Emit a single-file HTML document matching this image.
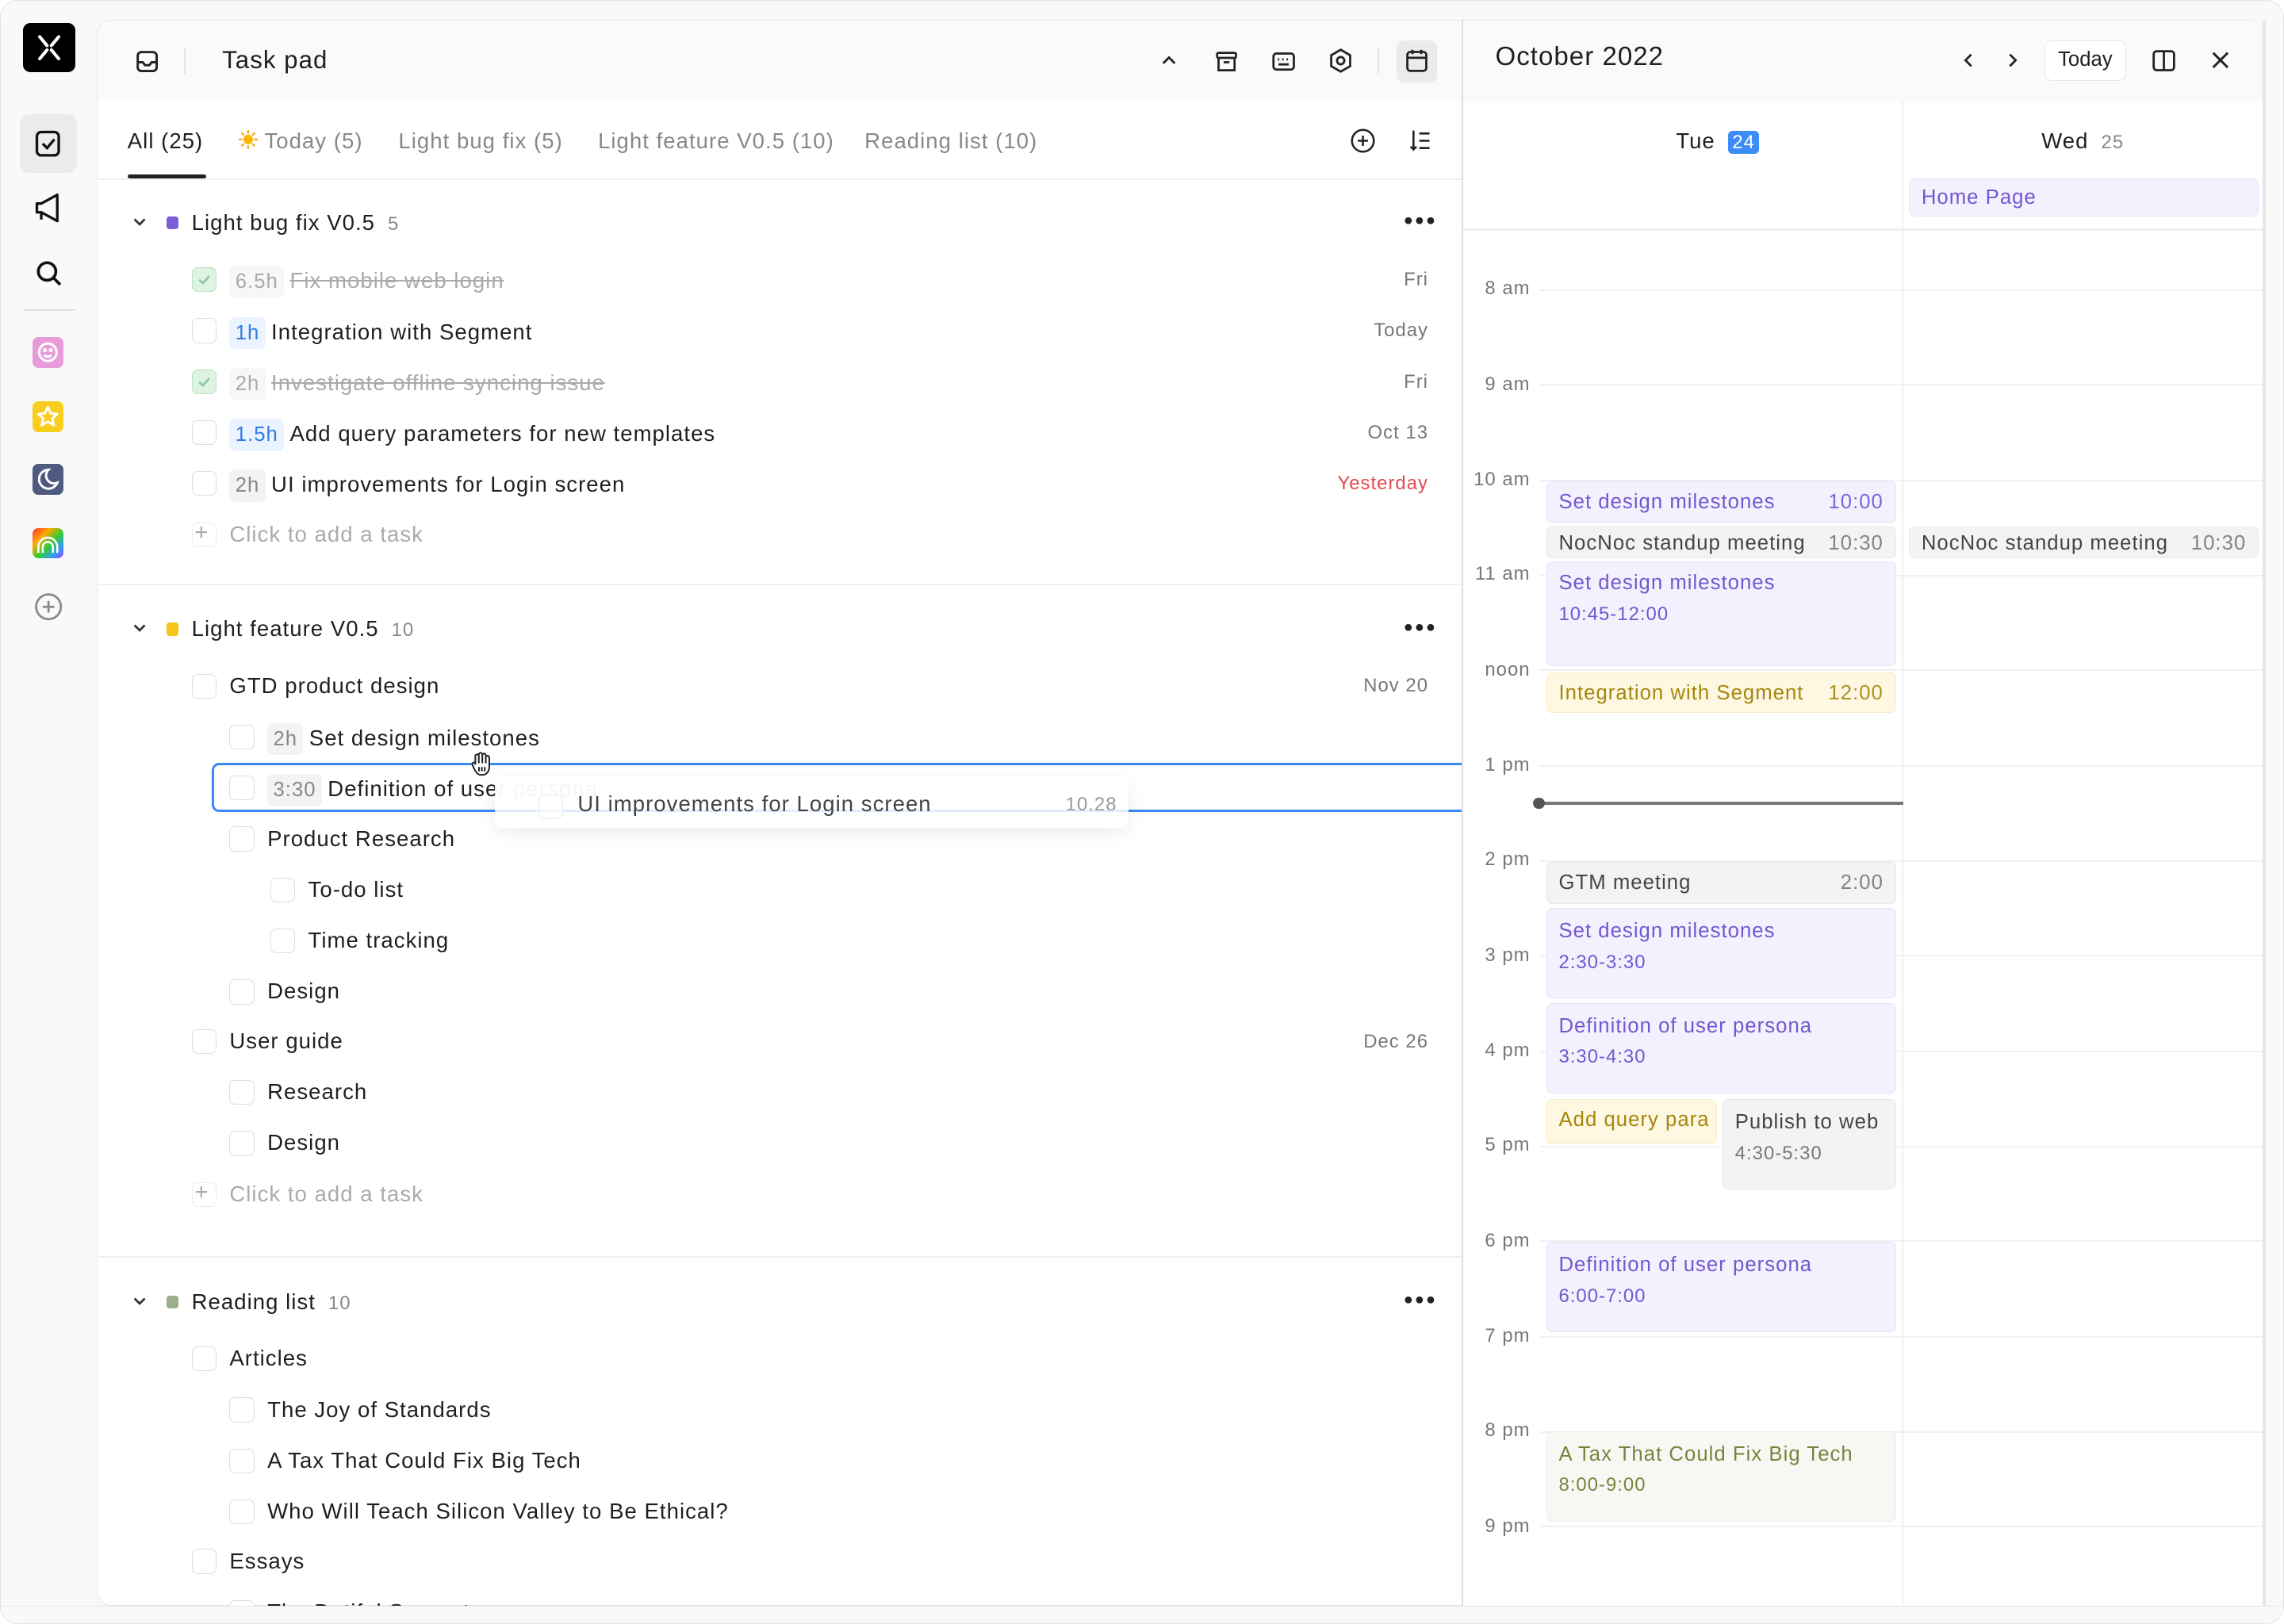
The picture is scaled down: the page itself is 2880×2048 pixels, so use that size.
<!DOCTYPE html>
<html><head><meta charset="utf-8"><style>
*{box-sizing:border-box;margin:0;padding:0}
html,body{width:2880px;height:2048px;overflow:hidden;background:#fff}
#r{zoom:1.83674;width:1568px;height:1115px;position:relative;font-family:"Liberation Sans",Arial,sans-serif;color:#1f1f1f;background:#f9f9f9;border:1px solid #e3e3e3;border-radius:12px;overflow:hidden;letter-spacing:0.035em}
.a{position:absolute}
.main{left:66px;top:13px;width:1489px;height:1089px;background:#fff;border:1px solid #e6e6e6;border-radius:10px;overflow:hidden}
.t{position:absolute;font-size:15px;white-space:nowrap;line-height:18px}
.cb{position:absolute;width:17px;height:17px;border:1px solid #ddd;border-radius:4px;background:#fff}
.cb.d{background:#dff3e3;border-color:#b9e2c2}
.tag{display:inline-block;padding:0 4px;border-radius:4px;background:#f3f3f3;color:#888;font-size:14px;line-height:22px;margin-right:4px}
.tag.b{background:#eaf3ff;color:#2f7de1}
.date{position:absolute;right:0;font-size:13px;color:#777;text-align:right;width:100px}
.ev{position:absolute;border-radius:4px;font-size:14px;padding:5px 8px;line-height:18px;white-space:nowrap;overflow:hidden}
.p{background:#f3f1fd;border:1px solid #e6e2f8;color:#7257cf}
.g{background:#f3f3f3;border:1px solid #e8e8e8;color:#444}
.y{background:#fef8e3;border:1px solid #f8edc0;color:#a5860c}
.o{background:#f7f8f3;border:1px solid #ecede6;color:#77843f}
.ev .tm{position:absolute;right:8px;top:5px;opacity:.9}
.hl{position:absolute;left:1057px;width:498px;height:1px;background:#f0f0f0}
.hr{position:absolute;width:40px;text-align:right;left:1010px;font-size:13px;color:#777}
.dots{position:absolute;font-size:11px;letter-spacing:1px;color:#222}
svg{position:absolute}
</style></head><body><div id="r">
<!-- sidebar -->
<div class="a" style="left:15px;top:15px;width:36px;height:34px;background:#000;border-radius:5px"></div>
<svg style="left:15px;top:15px" width="36" height="34" viewBox="0 0 36 34"><path d="M11.5 9.5l5 6M24.5 9.5l-5 6M11.5 24.5l5-6M24.5 24.5l-5-6" stroke="#fff" stroke-width="2.2" stroke-linecap="round"/></svg>
<div class="a" style="left:13px;top:78px;width:39px;height:40px;background:#ebebeb;border-radius:6px"></div>
<svg style="left:22px;top:87px" width="22" height="22" viewBox="0 0 22 22" fill="none" stroke="#111" stroke-width="1.8"><rect x="3" y="3" width="15" height="16" rx="3"/><path d="M7 11l3 3 5-6"/></svg>
<svg style="left:22px;top:131px" width="22" height="22" viewBox="0 0 22 22" fill="none" stroke="#111" stroke-width="1.8" stroke-linejoin="round"><path d="M3 8h3l11-6v18L6 14H3z M6 14v5"/></svg>
<svg style="left:22px;top:176px" width="22" height="22" viewBox="0 0 22 22" fill="none" stroke="#111" stroke-width="2"><circle cx="10" cy="10" r="6"/><path d="M14.5 14.5L19 19"/></svg>
<div class="a" style="left:15px;top:212px;width:36px;height:1px;background:#e3e3e3"></div>
<div class="a" style="left:22px;top:231px;width:21px;height:21px;background:#e89bd9;border-radius:4px"></div>
<svg style="left:22px;top:231px" width="21" height="21" viewBox="0 0 21 21" fill="none" stroke="#fff" stroke-width="1.6"><circle cx="10.5" cy="10.5" r="6"/><path d="M8 12.5q2.5 2 5 0"/><circle cx="8.5" cy="9" r=".6" fill="#fff"/><circle cx="12.5" cy="9" r=".6" fill="#fff"/></svg>
<div class="a" style="left:22px;top:275px;width:21px;height:21px;background:#f8cd1d;border-radius:4px"></div>
<svg style="left:22px;top:275px" width="21" height="21" viewBox="0 0 21 21" fill="none" stroke="#fff" stroke-width="1.6" stroke-linejoin="round"><path d="M10.5 4l2 4.3 4.5.5-3.4 3 1 4.6-4.1-2.4-4.1 2.4 1-4.6-3.4-3 4.5-.5z"/></svg>
<div class="a" style="left:22px;top:318px;width:21px;height:21px;background:#4e5a7e;border-radius:4px"></div>
<svg style="left:22px;top:318px" width="21" height="21" viewBox="0 0 21 21" fill="none" stroke="#fff" stroke-width="1.6"><path d="M11 4a6.5 6.5 0 1 0 6 9A5.5 5.5 0 0 1 11 4z"/></svg>
<div class="a" style="left:22px;top:362px;width:21px;height:21px;border-radius:4px;background:linear-gradient(135deg,#f33 0%,#fa0 30%,#3c3 55%,#39f 80%,#a3f 100%)"></div>
<svg style="left:22px;top:362px" width="21" height="21" viewBox="0 0 21 21" fill="none" stroke="#fff" stroke-width="1.4"><path d="M4 17v-4a6.5 6.5 0 0 1 13 0v4M7 17v-4a3.5 3.5 0 0 1 7 0v4"/></svg>
<svg style="left:22px;top:405px" width="22" height="22" viewBox="0 0 22 22" fill="none" stroke="#888" stroke-width="1.5"><circle cx="11" cy="11" r="8.5"/><path d="M11 7v8M7 11h8"/></svg>

<div class="a main">
 <div class="a" style="left:0;top:0;width:1489px;height:55px;background:#fafafa"></div>
</div>
<!-- header -->
<svg style="left:92px;top:33px" width="17" height="17" viewBox="0 0 17 17" fill="none" stroke="#222" stroke-width="1.6"><rect x="2" y="2" width="13" height="13" rx="2.5"/><path d="M2 9h3.5l1.5 2h3l1.5-2H15"/></svg>
<div class="a" style="left:126px;top:32px;width:1px;height:18px;background:#e3e3e3"></div>
<div class="t" style="left:152px;top:31px;font-size:17px;line-height:20px">Task pad</div>
<svg style="left:796px;top:36px" width="12" height="10" viewBox="0 0 12 10" fill="none" stroke="#222" stroke-width="1.5"><path d="M2 7l4-4 4 4"/></svg>
<svg style="left:833px;top:33px" width="17" height="17" viewBox="0 0 17 17" fill="none" stroke="#222" stroke-width="1.5"><rect x="2" y="2.5" width="13" height="3.5" rx="1"/><path d="M3 6v8.5h11V6M6.5 9h4"/></svg>
<svg style="left:872px;top:33px" width="17" height="17" viewBox="0 0 17 17" fill="none" stroke="#222" stroke-width="1.5"><rect x="1.5" y="3" width="14" height="11" rx="2"/><path d="M4.5 7h1M7.5 7h1M10.5 7h1M5 10.5h7" /></svg>
<svg style="left:911px;top:32px" width="18" height="18" viewBox="0 0 18 18" fill="none" stroke="#222" stroke-width="1.5"><path d="M9 1.5l6.5 3.75v7.5L9 16.5 2.5 12.75v-7.5z"/><circle cx="9" cy="9" r="2.5"/></svg>
<div class="a" style="left:945px;top:32px;width:1px;height:18px;background:#e3e3e3"></div>
<div class="a" style="left:958px;top:27px;width:28px;height:29px;background:#ebebeb;border-radius:5px"></div>
<svg style="left:963px;top:32px" width="18" height="18" viewBox="0 0 18 18" fill="none" stroke="#222" stroke-width="1.5"><rect x="2.5" y="3" width="13" height="13" rx="2"/><path d="M2.5 7h13M6 1.5v3M12 1.5v3"/></svg>
<div class="t" style="left:1026px;top:29px;font-size:18px;line-height:20px">October 2022</div>
<svg style="left:1345px;top:35px" width="12" height="12" viewBox="0 0 12 12" fill="none" stroke="#222" stroke-width="1.5"><path d="M8 2L4 6l4 4"/></svg>
<svg style="left:1375px;top:35px" width="12" height="12" viewBox="0 0 12 12" fill="none" stroke="#222" stroke-width="1.5"><path d="M4 2l4 4-4 4"/></svg>
<div class="a" style="left:1403px;top:27px;width:56px;height:28px;background:#fff;border:1px solid #e6e6e6;border-radius:5px;font-size:14px;text-align:center;line-height:26px;letter-spacing:0">Today</div>
<svg style="left:1476px;top:32px" width="18" height="18" viewBox="0 0 18 18" fill="none" stroke="#222" stroke-width="1.5"><rect x="2" y="2.5" width="14" height="13" rx="2"/><path d="M9 2.5v13"/></svg>
<svg style="left:1517px;top:34px" width="14" height="14" viewBox="0 0 14 14" fill="none" stroke="#222" stroke-width="1.6"><path d="M2 2l10 10M12 2L2 12"/></svg>

<!-- tabs -->
<div class="t" style="left:87px;top:87px;color:#1f1f1f">All (25)</div>
<div class="a" style="left:87px;top:119px;width:54px;height:3px;background:#222;border-radius:2px"></div>
<svg style="left:163px;top:88px" width="14" height="14" viewBox="0 0 14 14"><g stroke="#f5a623" stroke-width="1.2"><path d="M7 0.5v2.5M7 11v2.5M0.5 7h2.5M11 7h2.5M2.4 2.4l1.8 1.8M9.8 9.8l1.8 1.8M2.4 11.6l1.8-1.8M9.8 4.2l1.8-1.8"/></g><circle cx="7" cy="7" r="3.3" fill="#f8b800"/></svg>
<div class="t" style="left:181px;top:87px;color:#888">Today (5)</div>
<div class="t" style="left:273px;top:87px;color:#888">Light bug fix (5)</div>
<div class="t" style="left:410px;top:87px;color:#888">Light feature V0.5 (10)</div>
<div class="t" style="left:593px;top:87px;color:#888">Reading list (10)</div>
<svg style="left:926px;top:87px" width="18" height="18" viewBox="0 0 18 18" fill="none" stroke="#222" stroke-width="1.4"><circle cx="9" cy="9" r="7.5"/><path d="M9 5.5v7M5.5 9h7"/></svg>
<svg style="left:966px;top:87px" width="18" height="18" viewBox="0 0 18 18" fill="none" stroke="#222" stroke-width="1.4"><path d="M4 2v13M2 13l2 2 2-2M8 4h7M8 9h7M8 14h7"/></svg>
<div class="a" style="left:67px;top:122px;width:936px;height:1px;background:#efefef"></div>

<!-- group 1 -->
<svg style="left:90px;top:147px" width="11" height="10" viewBox="0 0 11 10" fill="none" stroke="#333" stroke-width="1.5"><path d="M2 3l3.5 3.5L9 3"/></svg>
<div class="a" style="left:114px;top:148px;width:8px;height:9px;background:#7b5dd6;border-radius:2px"></div>
<div class="t" style="left:131px;top:143px">Light bug fix V0.5 <span style="color:#888;font-size:13px;margin-left:4px">5</span></div>
<div class="dots" style="left:963px;top:145px">●●●</div>

<div class="cb d" style="left:131px;top:183px"></div><svg style="left:131px;top:183px" width="17" height="17" viewBox="0 0 17 17" fill="none" stroke="#8cc79a" stroke-width="1.4"><path d="M5 8.5l2.5 2.5 4.5-5"/></svg>
<div class="t" style="left:157px;top:182px;color:#aaa;text-decoration:line-through"><span class="tag" style="background:#f7f7f7;color:#aaa">6.5h</span>Fix mobile web login</div>
<div class="date" style="left:880px;top:184px">Fri</div>
<div class="cb" style="left:131px;top:218px"></div>
<div class="t" style="left:157px;top:217px"><span class="tag b">1h</span>Integration with Segment</div>
<div class="date" style="left:880px;top:219px">Today</div>
<div class="cb d" style="left:131px;top:253px"></div><svg style="left:131px;top:253px" width="17" height="17" viewBox="0 0 17 17" fill="none" stroke="#8cc79a" stroke-width="1.4"><path d="M5 8.5l2.5 2.5 4.5-5"/></svg>
<div class="t" style="left:157px;top:252px;color:#aaa;text-decoration:line-through"><span class="tag" style="background:#f7f7f7;color:#aaa">2h</span>Investigate offline syncing issue</div>
<div class="date" style="left:880px;top:254px">Fri</div>
<div class="cb" style="left:131px;top:288px"></div>
<div class="t" style="left:157px;top:287px"><span class="tag b">1.5h</span>Add query parameters for new templates</div>
<div class="date" style="left:880px;top:289px">Oct 13</div>
<div class="cb" style="left:131px;top:323px"></div>
<div class="t" style="left:157px;top:322px"><span class="tag">2h</span>UI improvements for Login screen</div>
<div class="date" style="left:880px;top:324px;color:#e5484d">Yesterday</div>
<div class="cb" style="left:131px;top:358px;border-style:dashed"></div><div class="t" style="left:133px;top:356px;color:#aaa;font-size:16px">+</div>
<div class="t" style="left:157px;top:357px;color:#aaa">Click to add a task</div>
<div class="a" style="left:67px;top:400px;width:936px;height:1px;background:#efefef"></div>

<!-- group 2 -->
<svg style="left:90px;top:426px" width="11" height="10" viewBox="0 0 11 10" fill="none" stroke="#333" stroke-width="1.5"><path d="M2 3l3.5 3.5L9 3"/></svg>
<div class="a" style="left:114px;top:427px;width:8px;height:9px;background:#f5c518;border-radius:2px"></div>
<div class="t" style="left:131px;top:422px">Light feature V0.5 <span style="color:#888;font-size:13px;margin-left:4px">10</span></div>
<div class="dots" style="left:963px;top:424px">●●●</div>
<div class="cb" style="left:131px;top:462px"></div><div class="t" style="left:157px;top:461px">GTD product design</div><div class="date" style="left:880px;top:463px">Nov 20</div>
<div class="cb" style="left:157px;top:497px"></div><div class="t" style="left:183px;top:496px"><span class="tag">2h</span>Set design milestones</div>
<div class="a" style="left:145px;top:523px;width:870px;height:34px;border:2px solid #3b87f3;border-radius:5px"></div>
<div class="cb" style="left:157px;top:532px"></div><div class="t" style="left:183px;top:531px"><span class="tag">3:30</span>Definition of use<span style="color:#bbb">r persona</span></div>
<div class="a" style="left:339px;top:533px;width:435px;height:35px;background:rgba(255,255,255,.85);border-radius:5px;box-shadow:0 3px 12px rgba(0,0,0,.08)"></div>
<div class="cb" style="left:369px;top:545px;opacity:.6"></div>
<div class="t" style="left:396px;top:542px;color:#444">UI improvements for Login screen</div>
<div class="t" style="left:731px;top:543px;color:#999;font-size:13px">10.28</div>
<svg style="left:322px;top:515px" width="16" height="18" viewBox="0 0 16 18" fill="#fff" stroke="#222" stroke-width="1.1" stroke-linejoin="round"><path d="M4 9V3.5a1.2 1.2 0 0 1 2.4 0V8V2.5a1.2 1.2 0 0 1 2.4 0V8V3a1.2 1.2 0 0 1 2.4 0v5V4.5a1.2 1.2 0 0 1 2.4 0V11c0 3-2 5.5-5 5.5-2.5 0-3.5-1-5-3.5L2 9.5a1.2 1.2 0 0 1 2-1.2z"/><path d="M6.5 11v3M8.5 11v3M10.5 11v3"/></svg>
<div class="cb" style="left:157px;top:567px"></div><div class="t" style="left:183px;top:566px">Product Research</div>
<div class="cb" style="left:185px;top:602px"></div><div class="t" style="left:211px;top:601px">To-do list</div>
<div class="cb" style="left:185px;top:637px"></div><div class="t" style="left:211px;top:636px">Time tracking</div>
<div class="cb" style="left:157px;top:672px"></div><div class="t" style="left:183px;top:671px">Design</div>
<div class="cb" style="left:131px;top:706px"></div><div class="t" style="left:157px;top:705px">User guide</div><div class="date" style="left:880px;top:707px">Dec 26</div>
<div class="cb" style="left:157px;top:741px"></div><div class="t" style="left:183px;top:740px">Research</div>
<div class="cb" style="left:157px;top:776px"></div><div class="t" style="left:183px;top:775px">Design</div>
<div class="cb" style="left:131px;top:811px;border-style:dashed"></div><div class="t" style="left:133px;top:809px;color:#aaa;font-size:16px">+</div>
<div class="t" style="left:157px;top:810px;color:#aaa">Click to add a task</div>
<div class="a" style="left:67px;top:862px;width:936px;height:1px;background:#efefef"></div>

<!-- group 3 -->
<svg style="left:90px;top:888px" width="11" height="10" viewBox="0 0 11 10" fill="none" stroke="#333" stroke-width="1.5"><path d="M2 3l3.5 3.5L9 3"/></svg>
<div class="a" style="left:114px;top:889px;width:8px;height:9px;background:#9aae87;border-radius:2px"></div>
<div class="t" style="left:131px;top:884px">Reading list <span style="color:#888;font-size:13px;margin-left:4px">10</span></div>
<div class="dots" style="left:963px;top:886px">●●●</div>
<div class="cb" style="left:131px;top:924px"></div><div class="t" style="left:157px;top:923px">Articles</div>
<div class="cb" style="left:157px;top:959px"></div><div class="t" style="left:183px;top:958px">The Joy of Standards</div>
<div class="cb" style="left:157px;top:994px"></div><div class="t" style="left:183px;top:993px">A Tax That Could Fix Big Tech</div>
<div class="cb" style="left:157px;top:1029px"></div><div class="t" style="left:183px;top:1028px">Who Will Teach Silicon Valley to Be Ethical?</div>
<div class="cb" style="left:131px;top:1063px"></div><div class="t" style="left:157px;top:1062px">Essays</div>
<div class="cb" style="left:157px;top:1098px"></div><div class="t" style="left:183px;top:1097px">The Dutiful Servant</div>

<!-- calendar panel (covers drag box overflow) -->
<div class="a" style="left:1004px;top:56px;width:549px;height:1046px;background:#fff"></div>
<div class="a" style="left:1004px;top:14px;width:549px;height:55px;background:#fafafa;z-index:-0"></div>
<div class="t" style="left:1026px;top:29px;font-size:18px;line-height:20px">October 2022</div>
<svg style="left:1345px;top:35px" width="12" height="12" viewBox="0 0 12 12" fill="none" stroke="#222" stroke-width="1.5"><path d="M8 2L4 6l4 4"/></svg>
<svg style="left:1375px;top:35px" width="12" height="12" viewBox="0 0 12 12" fill="none" stroke="#222" stroke-width="1.5"><path d="M4 2l4 4-4 4"/></svg>
<div class="a" style="left:1403px;top:27px;width:56px;height:28px;background:#fff;border:1px solid #e6e6e6;border-radius:5px;font-size:14px;text-align:center;line-height:26px;letter-spacing:0">Today</div>
<svg style="left:1476px;top:32px" width="18" height="18" viewBox="0 0 18 18" fill="none" stroke="#222" stroke-width="1.5"><rect x="2" y="2.5" width="14" height="13" rx="2"/><path d="M9 2.5v13"/></svg>
<svg style="left:1517px;top:34px" width="14" height="14" viewBox="0 0 14 14" fill="none" stroke="#222" stroke-width="1.6"><path d="M2 2l10 10M12 2L2 12"/></svg>
<div class="a" style="left:1003px;top:13px;width:1px;height:1089px;background:#dcdcdc"></div>

<div class="t" style="left:1150px;top:87px">Tue <span style="display:inline-block;background:#3b8df5;color:#fff;font-size:13px;line-height:16px;padding:0 3px;border-radius:3px;margin-left:4px">24</span></div>
<div class="t" style="left:1401px;top:87px">Wed <span style="color:#888;font-size:13px;margin-left:4px">25</span></div>
<div class="a" style="left:1305px;top:68px;width:1px;height:1034px;background:#efefef"></div>
<div class="ev p" style="left:1310px;top:122px;width:240px;height:26px;padding-top:4px">Home Page</div>
<div class="a" style="left:1004px;top:156px;width:551px;height:2px;background:#f0f0f0"></div>

<div class="hr" style="top:190px">8 am</div><div class="hl" style="top:198px"></div>
<div class="hr" style="top:256px">9 am</div><div class="hl" style="top:263px"></div>
<div class="hr" style="top:321px">10 am</div><div class="hl" style="top:329px"></div>
<div class="hr" style="top:386px">11 am</div><div class="hl" style="top:394px"></div>
<div class="hr" style="top:452px">noon</div><div class="hl" style="top:459px"></div>
<div class="hr" style="top:517px">1 pm</div><div class="hl" style="top:525px"></div>
<div class="hr" style="top:582px">2 pm</div><div class="hl" style="top:590px"></div>
<div class="hr" style="top:648px">3 pm</div><div class="hl" style="top:655px"></div>
<div class="hr" style="top:713px">4 pm</div><div class="hl" style="top:721px"></div>
<div class="hr" style="top:778px">5 pm</div><div class="hl" style="top:786px"></div>
<div class="hr" style="top:844px">6 pm</div><div class="hl" style="top:851px"></div>
<div class="hr" style="top:909px">7 pm</div><div class="hl" style="top:917px"></div>
<div class="hr" style="top:974px">8 pm</div><div class="hl" style="top:982px"></div>
<div class="hr" style="top:1040px">9 pm</div><div class="hl" style="top:1047px"></div>

<div class="ev p" style="left:1061px;top:330px;width:240px;height:28px">Set design milestones<span class="tm">10:00</span></div>
<div class="ev g" style="left:1061px;top:361px;width:240px;height:22px;padding-top:2px">NocNoc standup meeting<span class="tm" style="top:2px;color:#777">10:30</span></div>
<div class="ev g" style="left:1310px;top:361px;width:240px;height:22px;padding-top:2px">NocNoc standup meeting<span class="tm" style="top:2px;color:#777">10:30</span></div>
<div class="ev p" style="left:1061px;top:385px;width:240px;height:72px;line-height:21px;padding-top:4px">Set design milestones<br><span style="font-size:13px">10:45-12:00</span></div>
<div class="ev y" style="left:1061px;top:461px;width:240px;height:28px">Integration with Segment<span class="tm">12:00</span></div>
<div class="a" style="left:1057px;top:550px;width:249px;height:2px;background:#777"></div>
<div class="a" style="left:1052px;top:547px;width:8px;height:8px;border-radius:50%;background:#555"></div>
<div class="ev g" style="left:1061px;top:591px;width:240px;height:29px">GTM meeting<span class="tm" style="color:#777">2:00</span></div>
<div class="ev p" style="left:1061px;top:623px;width:240px;height:62px;line-height:21px;padding-top:5px">Set design milestones<br><span style="font-size:13px">2:30-3:30</span></div>
<div class="ev p" style="left:1061px;top:688px;width:240px;height:62px;line-height:21px;padding-top:5px">Definition of user persona<br><span style="font-size:13px">3:30-4:30</span></div>
<div class="ev y" style="left:1061px;top:754px;width:117px;height:31px">Add query para</div>
<div class="ev g" style="left:1182px;top:754px;width:119px;height:62px;line-height:21px;padding-top:5px">Publish to web<br><span style="font-size:13px;color:#777">4:30-5:30</span></div>
<div class="ev p" style="left:1061px;top:852px;width:240px;height:62px;line-height:21px;padding-top:5px">Definition of user persona<br><span style="font-size:13px">6:00-7:00</span></div>
<div class="ev o" style="left:1061px;top:982px;width:240px;height:62px;line-height:21px;padding-top:5px">A Tax That Could Fix Big Tech<br><span style="font-size:13px">8:00-9:00</span></div>
<div class="a" style="left:1553px;top:13px;width:2px;height:1089px;background:#e6e6e6"></div>
<div class="a" style="left:0;top:1102px;width:1568px;height:13px;background:#f9f9f9;border-top:1px solid #e6e6e6"></div>
</div></body></html>
